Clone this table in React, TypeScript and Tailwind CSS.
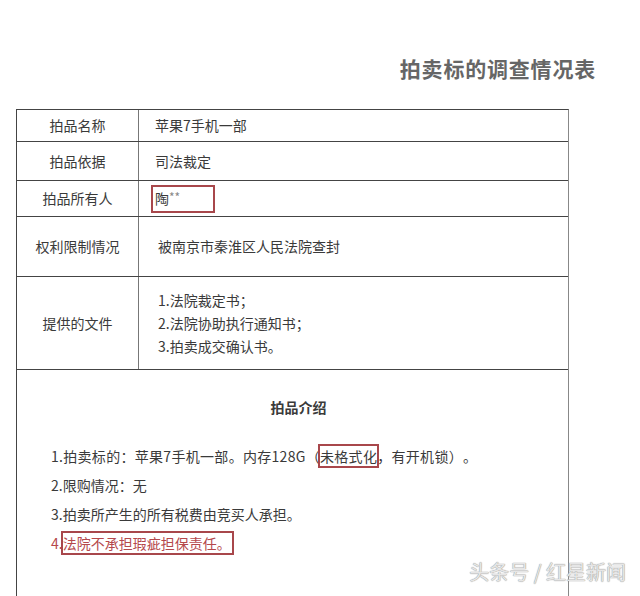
const font = { fontFamily: '"Noto Sans CJK SC", "Noto Sans", sans-serif' };

function Row({
  label,
  h,
  children,
}: {
  label: string;
  h: string;
  children: React.ReactNode;
}) {
  return (
    <div className={`flex border-b border-[#444] ${h}`}>
      <div className="w-[122px] shrink-0 border-r border-[#777] flex items-center justify-center">
        {label}
      </div>
      <div className="flex-1 flex items-center">{children}</div>
    </div>
  );
}

export default function App() {
  return (
    <div
      className="relative w-[640px] h-[596px] overflow-hidden bg-white text-[14px] text-[#3a3a3a] [text-spacing-trim:space-all]"
      style={font}
    >
      {/* 标题 */}
      <div className="pt-[53px] pr-[44px] flex justify-end">
        <h1 className="text-[21px] leading-[30px] font-bold text-[#666] tracking-[0.8px]">
          拍卖标的调查情况表
        </h1>
      </div>

      {/* 表格 */}
      <div className="mt-[26px] ml-[16px] w-[553px] h-[500px] border border-[#444] border-r-[#888] border-b-0">
        <Row label="拍品名称" h="h-[32px]">
          <span className="pl-[16px]">苹果7手机一部</span>
        </Row>
        <Row label="拍品依据" h="h-[39px]">
          <span className="pl-[16px]">司法裁定</span>
        </Row>
        <Row label="拍品所有人" h="h-[36px]">
          <div className="ml-[12px] w-[64px] h-[28px] border-2 border-[#a8474b] flex items-center pl-[2px]">
            陶<span className="text-[#888] text-[12px] -mt-[4px]">**</span>
          </div>
        </Row>
        <Row label="权利限制情况" h="h-[60px]">
          <span className="pl-[19px]">被南京市秦淮区人民法院查封</span>
        </Row>
        <Row label="提供的文件" h="h-[93px]">
          <div className="pl-[19px] leading-[23px]">
            <div>1.法院裁定书；</div>
            <div>2.法院协助执行通知书；</div>
            <div>3.拍卖成交确认书。</div>
          </div>
        </Row>

        {/* 拍品介绍 */}
        <div className="pt-[27px]">
          <div className="text-center font-bold leading-[20px] pl-[12px]">拍品介绍</div>
          <div className="mt-[25px] pl-[34px] leading-[29px]">
            <div className="tracking-[0.3px]">
              1.拍卖标的：苹果7手机一部。内存128G（
              <span className="ring-2 ring-[#a8474b]">未格式化</span>，有开机锁）。
            </div>
            <div>2.限购情况：无</div>
            <div>3.拍卖所产生的所有税费由竞买人承担。</div>
            <div className="text-[#b5484c]">
              4.<span className="ring-2 ring-[#a8474b] pr-[1px]">法院不承担瑕疵担保责任。</span>
            </div>
          </div>
        </div>
      </div>

      {/* 水印 */}
      <div
        className="absolute right-[14px] bottom-[12px] text-[20px] leading-[24px] text-[#e6e6e6]"
        style={{ textShadow: "0 0 1px #999, 0 0 1px #999" }}
      >
        头条号 / 红星新闻
      </div>
    </div>
  );
}
